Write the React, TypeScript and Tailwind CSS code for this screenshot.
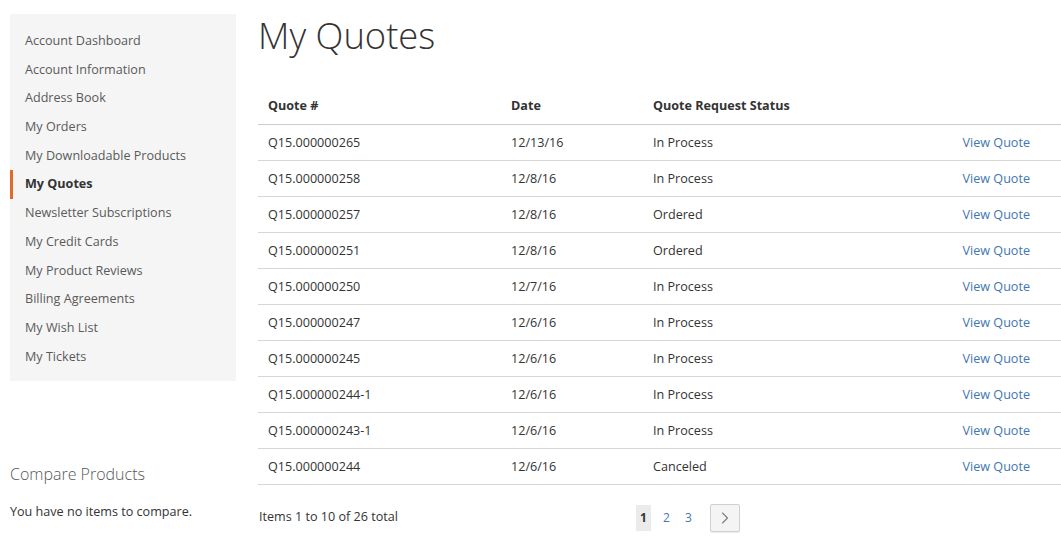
import { ChevronRight } from 'lucide-react'

const navItems = [
  'Account Dashboard',
  'Account Information',
  'Address Book',
  'My Orders',
  'My Downloadable Products',
  'My Quotes',
  'Newsletter Subscriptions',
  'My Credit Cards',
  'My Product Reviews',
  'Billing Agreements',
  'My Wish List',
  'My Tickets',
]

const quotes = [
  { id: 'Q15.000000265', date: '12/13/16', status: 'In Process' },
  { id: 'Q15.000000258', date: '12/8/16', status: 'In Process' },
  { id: 'Q15.000000257', date: '12/8/16', status: 'Ordered' },
  { id: 'Q15.000000251', date: '12/8/16', status: 'Ordered' },
  { id: 'Q15.000000250', date: '12/7/16', status: 'In Process' },
  { id: 'Q15.000000247', date: '12/6/16', status: 'In Process' },
  { id: 'Q15.000000245', date: '12/6/16', status: 'In Process' },
  { id: 'Q15.000000244-1', date: '12/6/16', status: 'In Process' },
  { id: 'Q15.000000243-1', date: '12/6/16', status: 'In Process' },
  { id: 'Q15.000000244', date: '12/6/16', status: 'Canceled' },
]

export default function App() {
  return (
    <div
      className="flex min-h-[551px] w-[1061px] overflow-hidden bg-white text-[12.6px] text-[#333]"
      style={{ fontFamily: '"Open Sans", "Liberation Sans", sans-serif' }}
    >
      {/* Sidebar */}
      <aside className="ml-[10px] w-[226px] shrink-0 pt-[14px]">
        <nav className="bg-[#f5f5f5] pt-[13px] pb-[10px]">
          {navItems.map((item) =>
            item === 'My Quotes' ? (
              <div
                key={item}
                className="h-[28.7px] border-l-[3px] border-[#e4692d] pl-[12px] font-bold leading-[28.7px] text-[#333]"
              >
                {item}
              </div>
            ) : (
              <div
                key={item}
                className="h-[28.7px] pl-[15px] leading-[28.7px] text-[#5a5a5a]"
              >
                {item}
              </div>
            ),
          )}
        </nav>

        <div className="mt-[80px]">
          <h2 className="h-[26px] text-[16px] font-light leading-[26px] text-[#575757]">
            Compare Products
          </h2>
          <p className="mt-[15px] leading-[20px] text-[#333]">
            You have no items to compare.
          </p>
        </div>
      </aside>

      {/* Main */}
      <main className="ml-[22px] flex-1 pt-[14px]">
        <h1 className="h-[42px] text-[36.4px] font-light leading-[42px] text-[#333]">
          My Quotes
        </h1>

        <table className="mt-[32px] w-full border-collapse">
          <thead>
            <tr className="h-[36px] border-b border-[#cccccc] text-left">
              <th className="w-[243px] pl-[10px] pt-[1px] font-bold">Quote #</th>
              <th className="w-[142px] pl-[10px] pt-[1px] font-bold">Date</th>
              <th className="pl-[10px] pt-[1px] font-bold">Quote Request Status</th>
              <th />
            </tr>
          </thead>
          <tbody>
            {quotes.map((q) => (
              <tr key={q.id} className="h-[36px] border-b border-[#d6d6d6]">
                <td className="pl-[10px] pt-[2px]">{q.id}</td>
                <td className="pl-[10px] pt-[2px]">{q.date}</td>
                <td className="pl-[10px] pt-[2px]">{q.status}</td>
                <td className="pr-[31px] pt-[2px] text-right">
                  <a className="text-[#3f77b0]" href="#">
                    View Quote
                  </a>
                </td>
              </tr>
            ))}
          </tbody>
        </table>

        {/* Toolbar */}
        <div className="mt-[19px] flex h-[28px] items-center">
          <div className="w-[378px] pl-[1px]">Items 1 to 10 of 26 total</div>
          <div className="flex items-center">
            <span className="flex h-[26px] w-[15px] items-center justify-center bg-[#ebebeb] text-[12px] font-bold">
              1
            </span>
            <a
              href="#"
              className="ml-[8px] flex w-[15px] justify-center text-[12px] text-[#3f77b0]"
            >
              2
            </a>
            <a
              href="#"
              className="ml-[7px] flex w-[15px] justify-center text-[12px] text-[#3f77b0]"
            >
              3
            </a>
            <a
              href="#"
              className="ml-[14px] flex h-[28px] w-[30px] items-center justify-center rounded-[2px] border border-[#d1d1d1] bg-[#f4f4f4] text-[#7d7d7d] shadow-[0_1px_1px_rgba(0,0,0,0.08)]"
            >
              <ChevronRight className="h-[20px] w-[20px]" strokeWidth={1.3} />
            </a>
          </div>
        </div>
      </main>
    </div>
  )
}
